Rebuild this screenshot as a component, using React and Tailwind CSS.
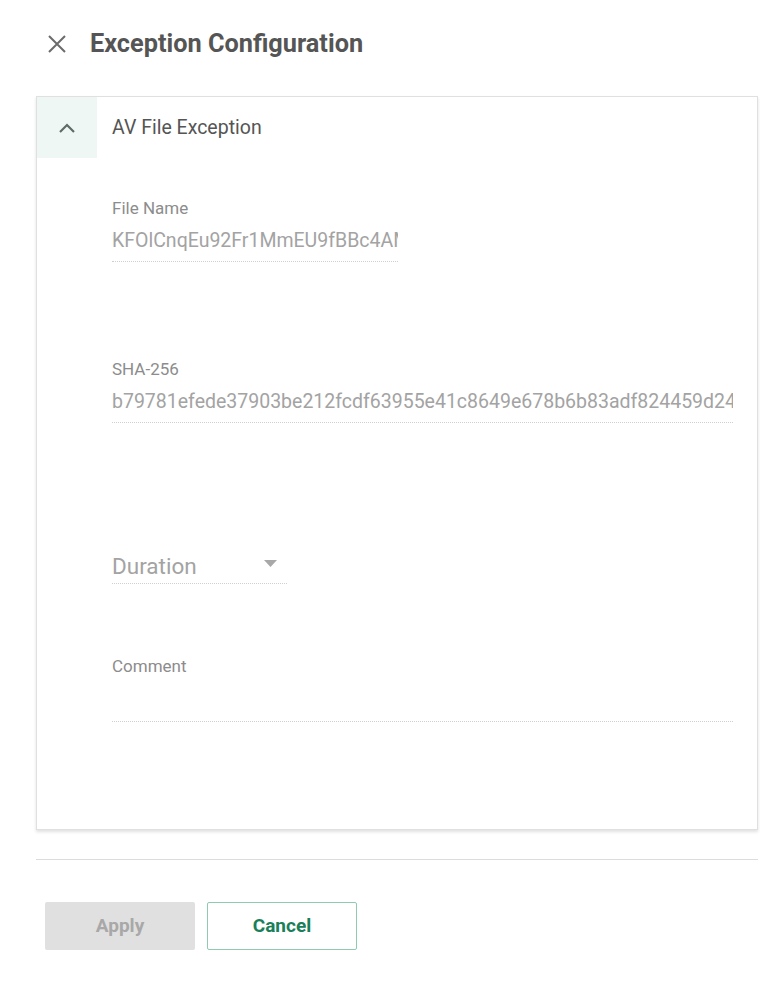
import { useState } from "react";

const font = { fontFamily: "Roboto, 'Liberation Sans', sans-serif" };

function Field({ label, value, width }) {
  return (
    <div style={{ width }}>
      <div className="text-[17px] leading-[20px] text-[#8c8c8c]">{label}</div>
      <div className="mt-[11px] overflow-hidden whitespace-nowrap border-b border-dotted border-[#cfcfcf] pb-[8px] text-[19.5px] leading-[24px] text-[#a3a3a3]">
        {value}
      </div>
    </div>
  );
}

export default function App() {
  const [open, setOpen] = useState(true);

  return (
    <div className="min-h-[994px] w-[760px] bg-white" style={font}>
      <div className="flex h-[90px] items-center pl-[48px] pb-[2px]">
        <button type="button" className="flex h-[18px] w-[18px] items-center justify-center">
          <svg width="18" height="18" viewBox="0 0 18 18">
            <path d="M1 1 L17 17 M17 1 L1 17" stroke="#6b6b6b" strokeWidth="2" />
          </svg>
        </button>
        <h1 className="ml-[24px] text-[25.3px] font-bold text-[#555555]">
          Exception Configuration
        </h1>
      </div>

      <div className="ml-[36px] mr-[2px] mt-[6px] border border-[#e0e0e0] shadow-[0_2px_3px_rgba(0,0,0,0.12)]">
        <div className="flex h-[61px] items-center">
          <button
            type="button"
            onClick={() => setOpen(!open)}
            className="flex h-[61px] w-[60px] items-center justify-center bg-[#eff7f4]"
          >
            <svg width="18" height="12" viewBox="0 0 18 12">
              <path
                d={open ? "M2 10 L9 3 L16 10" : "M2 3 L9 10 L16 3"}
                fill="none"
                stroke="#5f6b66"
                strokeWidth="2.2"
              />
            </svg>
          </button>
          <span className="ml-[15px] text-[19.5px] text-[#555555]">AV File Exception</span>
        </div>

        {open && (
          <div className="pl-[75px] pr-[24px] pt-[40px] pb-[107px]">
            <Field label="File Name" value="KFOlCnqEu92Fr1MmEU9fBBc4AMP6lbBP" width="286px" />
            <div className="mt-[97px]">
              <Field
                label="SHA-256"
                value="b79781efede37903be212fcdf63955e41c8649e678b6b83adf824459d24a1c02"
                width="621px"
              />
            </div>
            <div className="mt-[130px] flex w-[175px] items-center justify-between border-b border-dotted border-[#cfcfcf] pb-[4px]">
              <span className="text-[22.5px] leading-[26px] text-[#a3a3a3]">Duration</span>
              <svg width="13" height="7" viewBox="0 0 13 7" className="mr-[10px] mb-[5px]">
                <path d="M0 0 L13 0 L6.5 7 Z" fill="#a8a8a8" />
              </svg>
            </div>
            <div className="mt-[72px] w-[621px]">
              <div className="text-[17px] leading-[20px] text-[#8c8c8c]">Comment</div>
              <div className="mt-[45px] border-b border-dotted border-[#cfcfcf]" />
            </div>
          </div>
        )}
      </div>

      <div className="ml-[36px] mr-[2px] mt-[29px] border-t border-[#dcdcdc]" />

      <div className="ml-[45px] mt-[42px] flex gap-[12px]">
        <button
          type="button"
          disabled
          className="h-[48px] w-[150px] rounded-[2px] bg-[#e0e0e0] text-[19px] font-bold text-[#a8a8a8]"
        >
          Apply
        </button>
        <button
          type="button"
          className="h-[48px] w-[150px] rounded-[2px] border border-[#8fcbb0] bg-white text-[19px] font-bold text-[#19805a]"
        >
          Cancel
        </button>
      </div>
    </div>
  );
}
